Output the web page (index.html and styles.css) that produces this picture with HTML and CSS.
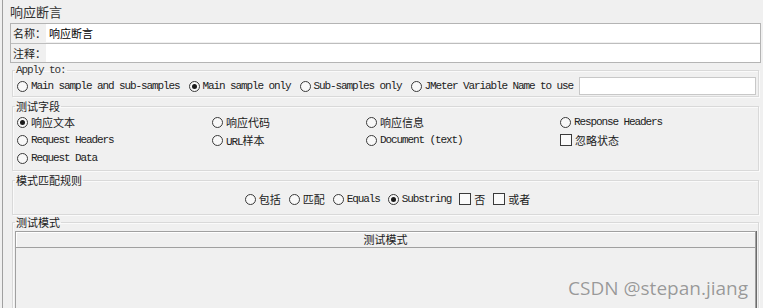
FILE: index.html
```html
<!DOCTYPE html>
<html lang="zh-CN">

<head>
    <meta charset="UTF-8">
    <meta name="viewport" content="width=device-width, initial-scale=1.0">
    <title>响应断言</title>
    <link rel="stylesheet" href="styles.css">
</head>

<body>
    <div class="page">
        <div class="title">响应断言</div>

        <div class="namebox">
            <div class="row">
                <label class="lbl">名称：</label>
                <input class="field" value="响应断言">
            </div>
            <div class="row row-sep">
                <label class="lbl">注释：</label>
                <input class="field">
            </div>
        </div>

        <fieldset class="group apply">
            <legend class="mono">Apply to:</legend>
            <div class="apply-row">
                <label class="opt"><span class="radio"></span><span class="mono">Main sample and sub-samples</span></label>
                <label class="opt"><span class="radio on"></span><span class="mono">Main sample only</span></label>
                <label class="opt"><span class="radio"></span><span class="mono">Sub-samples only</span></label>
                <label class="opt"><span class="radio"></span><span class="mono">JMeter Variable Name to use</span></label>
                <input class="field var">
            </div>
        </fieldset>

        <fieldset class="group fields">
            <legend>测试字段</legend>
            <div class="field-grid">
                <label class="opt"><span class="radio on"></span><span>响应文本</span></label>
                <label class="opt"><span class="radio"></span><span>响应代码</span></label>
                <label class="opt"><span class="radio"></span><span>响应信息</span></label>
                <label class="opt"><span class="radio"></span><span class="mono">Response Headers</span></label>

                <label class="opt"><span class="radio"></span><span class="mono">Request Headers</span></label>
                <label class="opt"><span class="radio"></span><span><span class="mono">URL</span>样本</span></label>
                <label class="opt"><span class="radio"></span><span class="mono">Document (text)</span></label>
                <label class="opt"><span class="check"></span><span>忽略状态</span></label>

                <label class="opt"><span class="radio"></span><span class="mono">Request Data</span></label>
            </div>
        </fieldset>

        <fieldset class="group rules">
            <legend>模式匹配规则</legend>
            <div class="rule-row">
                <label class="opt"><span class="radio"></span><span>包括</span></label>
                <label class="opt"><span class="radio"></span><span>匹配</span></label>
                <label class="opt"><span class="radio"></span><span class="mono">Equals</span></label>
                <label class="opt"><span class="radio on"></span><span class="mono">Substring</span></label>
                <label class="opt"><span class="check"></span><span>否</span></label>
                <label class="opt"><span class="check"></span><span>或者</span></label>
            </div>
        </fieldset>

        <fieldset class="group patterns">
            <legend>测试模式</legend>
            <div class="table">
                <div class="thead">测试模式</div>
            </div>
        </fieldset>
    </div>

    <div class="watermark">CSDN @stepan.jiang</div>
</body>

</html>
```

FILE: styles.css
```css
html,
body {
    margin: 0;
    height: 308px;
    overflow: hidden;
}

body {
    background: #f0f0f0;
    font-family: "Noto Sans CJK SC", "Liberation Sans", sans-serif;
    font-size: 11px;
    color: #1a1a1a;
    position: relative;
}

.mono {
    font-family: "Liberation Mono", "Noto Sans CJK SC", monospace;
    font-size: 11px;
    letter-spacing: -1.1px;
    color: #222;
}

.page {
    margin-left: 2px;
    border-left: 1px solid #a0a0a0;
    height: 308px;
    overflow: hidden;
}

.title {
    height: 23px;
    line-height: 23px;
    padding-left: 7px;
    font-size: 13px;
    color: #333;
}

/* name / comment box */
.namebox {
    margin: 0 2px 0 7px;
    border: 1px solid #b4b4b4;
}

.row {
    display: flex;
    height: 18px;
    align-items: stretch;
}

.row-sep {
    border-top: 1px solid #bdbdbd;
    margin-top: 1px;
}

.lbl {
    flex: none;
    width: 33px;
    padding-left: 2px;
    line-height: 18px;
    white-space: nowrap;
}

.field {
    flex: 1;
    min-width: 0;
    margin: 0;
    border: none;
    padding: 0 3px;
    background: #fff;
    font-family: "Noto Sans CJK SC", sans-serif;
    font-size: 11px;
    color: #000;
    outline: none;
}

/* groups */
.group {
    margin: 3px 4px 0 9px;
    padding: 0 2px;
    border: 1px solid #d9d9d9;
    box-shadow: inset 1px 1px 0 #fafafa, 1px 1px 0 #fafafa;
    min-width: 0;
}

.group legend {
    padding: 0 1px;
    line-height: 12px;
    height: 12px;
    white-space: nowrap;
}

.apply {
    margin-top: 1px;
}

.apply legend {
    color: #333;
}

.apply-row {
    display: flex;
    align-items: center;
    gap: 9px;
    height: 20px;
    padding-left: 2px;
}

.apply-row .var {
    height: 18px;
    border: 1px solid #c8c8c8;
    box-sizing: border-box;
    margin-left: -3px;
}

.fields {
    padding-top: 1px;
    padding-bottom: 3px;
}

.field-grid {
    display: grid;
    grid-template-columns: 195px 154px 194px 1fr;
    grid-auto-rows: 18px;
    padding-left: 2px;
}

.rules {
    padding-top: 4px;
    padding-bottom: 6px;
}

.rule-row {
    display: flex;
    justify-content: center;
    gap: 8px;
    height: 18px;
    padding-left: 4px;
}

.patterns {
    margin-top: 1px;
    height: 100px;
}

.table {
    margin-top: 3px;
    border: 1px solid #a0a0a0;
    box-shadow: 1px 0 0 #6c6c6c;
    height: 90px;
}

.thead {
    height: 15px;
    line-height: 15px;
    text-align: center;
    border-bottom: 1px solid #a0a0a0;
    box-shadow: inset 1px 1px 0 #fff;
}

/* options */
.opt {
    display: flex;
    align-items: center;
    gap: 3px;
    white-space: nowrap;
}

.radio {
    width: 9px;
    height: 9px;
    border: 1px solid #3a3a3a;
    border-radius: 50%;
    background: #f8f8f8;
    position: relative;
    flex: none;
}

.radio.on::after {
    content: "";
    position: absolute;
    left: 2px;
    top: 2px;
    width: 5px;
    height: 5px;
    border-radius: 50%;
    background: #1a1a1a;
}

.check {
    width: 10px;
    height: 10px;
    border: 1px solid #3a3a3a;
    background: #fafafa;
    flex: none;
}

.watermark {
    position: absolute;
    right: 15px;
    top: 277px;
    font-family: "Open Sans", sans-serif;
    font-size: 19px;
    line-height: 22px;
    color: #999;
    text-shadow: 0 0 1px #fff;
}
```
